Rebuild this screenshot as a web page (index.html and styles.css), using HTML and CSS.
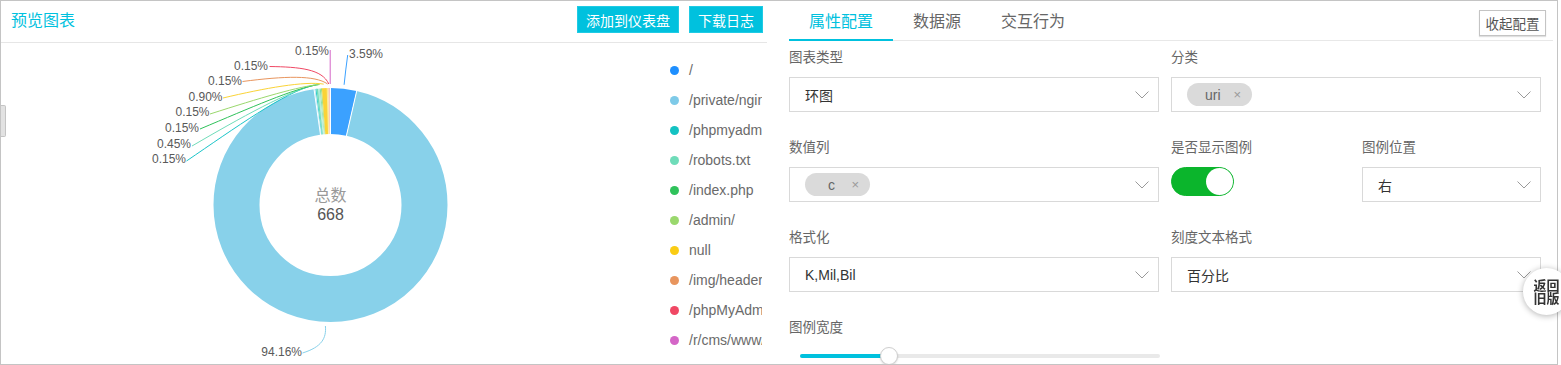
FILE: index.html
```html
<!DOCTYPE html>
<html lang="zh-CN">
<head>
    <meta charset="UTF-8">
    <meta name="viewport" content="width=device-width, initial-scale=1.0">
    <title>预览图表</title>
    <link rel="stylesheet" href="styles.css">
</head>
<body>
    <div class="page">
        <div class="preview">
            <div class="preview-head">
                <span class="preview-title">预览图表</span>
                <button class="btn">添加到仪表盘</button>
                <button class="btn">下载日志</button>
            </div>
            <div class="preview-body">
                <svg class="donut" width="640" height="321" viewBox="1 43 640 321">
                    <g fill="none" stroke-width="46" transform="rotate(-90 330.5 205)">
                        <circle cx="330.5" cy="205" r="94" stroke="#3ba1ff" stroke-dasharray="21.203 569.416"/>
                        <circle cx="330.5" cy="205" r="94" stroke="#88d1ea" stroke-dasharray="556.127 34.492" stroke-dashoffset="-21.203"/>
                        <circle cx="330.5" cy="205" r="94" stroke="#1bc5c9" stroke-dasharray="0.886 589.733" stroke-dashoffset="-577.330"/>
                        <circle cx="330.5" cy="205" r="94" stroke="#6fdcb9" stroke-dasharray="2.658 587.961" stroke-dashoffset="-578.216"/>
                        <circle cx="330.5" cy="205" r="94" stroke="#2fc25b" stroke-dasharray="0.886 589.733" stroke-dashoffset="-580.874"/>
                        <circle cx="330.5" cy="205" r="94" stroke="#9ad86d" stroke-dasharray="0.886 589.733" stroke-dashoffset="-581.760"/>
                        <circle cx="330.5" cy="205" r="94" stroke="#fad337" stroke-dasharray="5.316 585.303" stroke-dashoffset="-582.646"/>
                        <circle cx="330.5" cy="205" r="94" stroke="#e8955e" stroke-dasharray="0.886 589.733" stroke-dashoffset="-587.962"/>
                        <circle cx="330.5" cy="205" r="94" stroke="#f04864" stroke-dasharray="0.886 589.733" stroke-dashoffset="-588.847"/>
                        <circle cx="330.5" cy="205" r="94" stroke="#d466c7" stroke-dasharray="0.886 589.733" stroke-dashoffset="-589.733"/>
                    </g>
                    <!-- white borders between slices -->
                    <g stroke="#fff" stroke-width="1">
                        <line x1="330.5" y1="135" x2="330.5" y2="86"/>
                        <line x1="330.5" y1="135" x2="330.5" y2="86" transform="rotate(12.924 330.5 205)"/>
                        <line x1="330.5" y1="135" x2="330.5" y2="86" transform="rotate(351.9 330.5 205)"/>
                    </g>
                    <g stroke="#fff" stroke-width="0.5">
                        <line x1="330.5" y1="135" x2="330.5" y2="86" transform="rotate(352.44 330.5 205)"/>
                        <line x1="330.5" y1="135" x2="330.5" y2="86" transform="rotate(354.06 330.5 205)"/>
                        <line x1="330.5" y1="135" x2="330.5" y2="86" transform="rotate(354.6 330.5 205)"/>
                        <line x1="330.5" y1="135" x2="330.5" y2="86" transform="rotate(355.14 330.5 205)"/>
                        <line x1="330.5" y1="135" x2="330.5" y2="86" transform="rotate(358.38 330.5 205)"/>
                        <line x1="330.5" y1="135" x2="330.5" y2="86" transform="rotate(358.92 330.5 205)"/>
                        <line x1="330.5" y1="135" x2="330.5" y2="86" transform="rotate(359.46 330.5 205)"/>
                    </g>
                    <!-- label lines -->
                    <g fill="none" stroke-width="1">
                        <path stroke="#3ba1ff" d="M344.1 84.8 Q345.6 70 347.7 55"/>
                        <path stroke="#88d1ea" d="M325.4 326 C326.5 338 322 347 302.5 353"/>
                        <path stroke="#1bc5c9" d="M186.5 161 C235 128 285 92 314 85.1"/>
                        <path stroke="#6fdcb9" d="M192 146 C240 118 290 90 316.3 84.8"/>
                        <path stroke="#2fc25b" d="M200 129 C250 108 295 88 318.5 84.6"/>
                        <path stroke="#9ad86d" d="M210 114 C260 98 300 86 319.7 84.5"/>
                        <path stroke="#fad337" d="M223 98 C265 88 305 81 323.7 84.1"/>
                        <path stroke="#e8955e" d="M242.5 81.5 C285 76 315 75 327.6 84"/>
                        <path stroke="#f04864" d="M269.5 66.5 C300 67 322 69 328.8 84"/>
                        <path stroke="#d466c7" d="M330.2 84 L330.2 50"/>
                    </g>
                    <g class="lbl">
                        <text x="349" y="58">3.59%</text>
                        <text x="302" y="356" text-anchor="end">94.16%</text>
                        <text x="186" y="163" text-anchor="end">0.15%</text>
                        <text x="191" y="148" text-anchor="end">0.45%</text>
                        <text x="199" y="132" text-anchor="end">0.15%</text>
                        <text x="209.5" y="116" text-anchor="end">0.15%</text>
                        <text x="222.5" y="101" text-anchor="end">0.90%</text>
                        <text x="242" y="85" text-anchor="end">0.15%</text>
                        <text x="268" y="70" text-anchor="end">0.15%</text>
                        <text x="329" y="55" text-anchor="end">0.15%</text>
                    </g>
                    <text class="total-name" x="330.5" y="201" text-anchor="middle">总数</text>
                    <text class="total-value" x="330.5" y="220" text-anchor="middle">668</text>
                </svg>
                <ul class="legend">
                    <li><i class="dot" style="background:#1e8fff"></i>/</li>
                    <li><i class="dot" style="background:#7ecae8"></i>/private/nginx</li>
                    <li><i class="dot" style="background:#13c2c2"></i>/phpmyadmin/</li>
                    <li><i class="dot" style="background:#6fdcb9"></i>/robots.txt</li>
                    <li><i class="dot" style="background:#2fc25b"></i>/index.php</li>
                    <li><i class="dot" style="background:#9ad86d"></i>/admin/</li>
                    <li><i class="dot" style="background:#facc14"></i>null</li>
                    <li><i class="dot" style="background:#e8955e"></i>/img/header.png</li>
                    <li><i class="dot" style="background:#f04864"></i>/phpMyAdmin/</li>
                    <li><i class="dot" style="background:#d466c7"></i>/r/cms/www/</li>
                </ul>
            </div>
            <span class="side-handle"></span>
        </div>

        <div class="config">
            <div class="tabs">
                <span class="tab active">属性配置</span>
                <span class="tab">数据源</span>
                <span class="tab">交互行为</span>
                <button class="collapse">收起配置</button>
            </div>
            <div class="form">
                <div class="field">
                    <div class="field-label">图表类型</div>
                    <div class="select">
                        <span class="select-value">环图</span>
                        <svg class="chevron" width="14" height="8" viewBox="0 0 14 8"><polyline points="0.5,0.5 7,7 13.5,0.5"/></svg>
                    </div>
                </div>
                <div class="field wide">
                    <div class="field-label">分类</div>
                    <div class="select">
                        <span class="select-value"><span class="chip">uri<span class="chip-x">×</span></span></span>
                        <svg class="chevron" width="14" height="8" viewBox="0 0 14 8"><polyline points="0.5,0.5 7,7 13.5,0.5"/></svg>
                    </div>
                </div>

                <div class="field">
                    <div class="field-label">数值列</div>
                    <div class="select">
                        <span class="select-value"><span class="chip chip-short">c<span class="chip-x">×</span></span></span>
                        <svg class="chevron" width="14" height="8" viewBox="0 0 14 8"><polyline points="0.5,0.5 7,7 13.5,0.5"/></svg>
                    </div>
                </div>
                <div class="field">
                    <div class="field-label">是否显示图例</div>
                    <span class="switch"></span>
                </div>
                <div class="field">
                    <div class="field-label">图例位置</div>
                    <div class="select">
                        <span class="select-value">右</span>
                        <svg class="chevron" width="14" height="8" viewBox="0 0 14 8"><polyline points="0.5,0.5 7,7 13.5,0.5"/></svg>
                    </div>
                </div>

                <div class="field">
                    <div class="field-label">格式化</div>
                    <div class="select">
                        <span class="select-value">K,Mil,Bil</span>
                        <svg class="chevron" width="14" height="8" viewBox="0 0 14 8"><polyline points="0.5,0.5 7,7 13.5,0.5"/></svg>
                    </div>
                </div>
                <div class="field wide">
                    <div class="field-label">刻度文本格式</div>
                    <div class="select">
                        <span class="select-value">百分比</span>
                        <svg class="chevron" width="14" height="8" viewBox="0 0 14 8"><polyline points="0.5,0.5 7,7 13.5,0.5"/></svg>
                    </div>
                </div>

                <div class="field">
                    <div class="field-label">图例宽度</div>
                    <div class="slider">
                        <div class="slider-track"><div class="slider-fill" style="width:24.6%"></div></div>
                        <span class="slider-knob" style="left:24.6%"></span>
                    </div>
                </div>
            </div>
        </div>
    </div>
    <button class="back-old">返回<br>旧版</button>
</body>
</html>
```

FILE: styles.css
```css
* {
    box-sizing: border-box;
}
body {
    margin: 0;
    font-family: "Liberation Sans", "Noto Sans CJK SC", sans-serif;
    color: #333;
    background: #fff;
}
button {
    font-family: inherit;
    cursor: pointer;
}
.page {
    position: relative;
    display: flex;
    width: 1558px;
    height: 365px;
    border: 1px solid #c4c4c4;
    overflow: hidden;
}

/* left: chart preview */
.preview {
    width: 766px;
    display: flex;
    flex-direction: column;
}
.preview-head {
    height: 42px;
    display: flex;
    align-items: flex-start;
    padding: 5px 4px 0 10px;
    border-bottom: 1px solid #e6e6e6;
}
.preview-title {
    margin-right: auto;
    font-size: 16px;
    line-height: 30px;
    color: #00c1de;
}
.btn {
    height: 27px;
    margin-left: 10px;
    padding: 0 8px;
    border: 1px solid #1fcbe4;
    background: #00c1de;
    color: #fff;
    font-size: 14px;
}
.preview-body {
    display: flex;
    flex: 1;
}
.donut {
    display: block;
    flex: none;
}
.lbl {
    font-size: 12px;
    fill: #595959;
}
.total-name {
    font-size: 16px;
    fill: #999;
}
.total-value {
    font-size: 16px;
    fill: #555;
}
.legend {
    list-style: none;
    margin: 0 0 0 28px;
    padding: 12px 0 0;
    width: 93px;
    overflow: hidden;
}
.legend li {
    display: flex;
    align-items: center;
    height: 30px;
    white-space: nowrap;
    font-size: 14px;
    color: #6a6a6a;
}
.dot {
    flex: none;
    width: 9px;
    height: 9px;
    margin: 0 10px 0 1px;
    border-radius: 50%;
}
.side-handle {
    position: absolute;
    left: -1px;
    top: 104px;
    width: 6px;
    height: 32px;
    border: 1px solid #c4c4c4;
    border-left: none;
    border-radius: 0 2px 2px 0;
    background: #e2e2e2;
}

/* right: config panel */
.config {
    flex: 1;
    padding: 0 4px 0 22px;
}
.tabs {
    display: flex;
    align-items: flex-start;
    height: 40px;
    border-bottom: 1px solid #e8e8e8;
}
.tab {
    height: 40px;
    margin-bottom: -1px;
    padding: 4px 20px 0;
    line-height: 34px;
    font-size: 16px;
    color: #666;
    border-bottom: 2px solid transparent;
}
.tab.active {
    color: #00c1de;
    border-bottom-color: #00c1de;
}
.collapse {
    margin: 9px 7px 0 auto;
    width: 67px;
    height: 26px;
    padding: 0;
    border: 1px solid #c4c4c4;
    background: #fff;
    color: #555;
    font-size: 13.5px;
    box-shadow: 0 1px 1px rgba(0, 0, 0, 0.12);
}
.form {
    display: grid;
    grid-template-columns: 370px 179px 179px;
    column-gap: 12px;
    row-gap: 26px;
    padding-top: 7px;
}
.field.wide {
    grid-column: span 2;
}
.field-label {
    height: 20px;
    margin-bottom: 9px;
    font-size: 13.5px;
    line-height: 20px;
    color: #666;
}
.select {
    display: flex;
    align-items: center;
    height: 35px;
    padding: 0 9px 0 15px;
    border: 1px solid #d9d9d9;
    font-size: 14px;
    color: #333;
}
.select-value {
    flex: 1;
    display: flex;
}
.chevron polyline {
    fill: none;
    stroke: #9a9a9a;
    stroke-width: 1;
}
.chip {
    display: inline-flex;
    justify-content: space-between;
    align-items: center;
    width: 65px;
    height: 23px;
    padding: 0 11px 0 18px;
    border-radius: 12px;
    background: #dadada;
    color: #666;
    font-size: 14px;
}
.chip-short {
    padding-left: 23px;
}
.chip-x {
    font-size: 13px;
    color: #999;
}
.switch {
    display: block;
    position: relative;
    width: 63px;
    height: 29px;
    border: 1px solid #0bb52c;
    border-radius: 15px;
    background: #0bb52c;
}
.switch::after {
    content: "";
    position: absolute;
    top: 0;
    right: 0;
    width: 27px;
    height: 27px;
    border-radius: 50%;
    background: #fff;
}
.slider {
    position: relative;
    width: 360px;
    height: 18px;
    margin: 7px 0 0 11px;
}
.slider-track {
    position: relative;
    top: 7px;
    height: 4px;
    border-radius: 2px;
    background: #e9e9e9;
}
.slider-fill {
    height: 100%;
    border-radius: 2px 0 0 2px;
    background: #00c1de;
}
.slider-knob {
    position: absolute;
    top: 0;
    width: 18px;
    height: 18px;
    margin-left: -9px;
    border: 1px solid #cfcfcf;
    border-radius: 50%;
    background: #fff;
    box-shadow: 0 1px 2px rgba(0, 0, 0, 0.15);
}

.back-old {
    position: fixed;
    top: 268px;
    left: 1523px;
    width: 47px;
    height: 47px;
    padding: 0;
    border: none;
    border-radius: 50%;
    background: #fff;
    box-shadow: 0 1px 6px rgba(0, 0, 0, 0.3);
    color: #333;
    font-size: 13px;
    font-weight: bold;
    line-height: 13px;
}
```
